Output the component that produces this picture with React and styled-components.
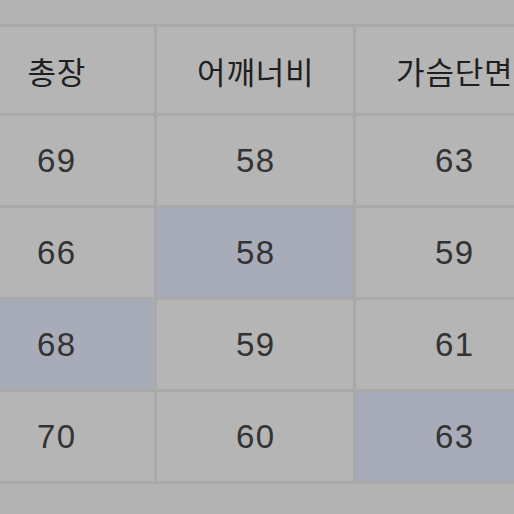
import React from "react";
import styled, { createGlobalStyle } from "styled-components";

const Global = createGlobalStyle`
  html, body { margin: 0; padding: 0; background: #b3b3b3; overflow: hidden; }
  body { width: 514px; height: 514px; }
`;

const Page = styled.div`
  width: 514px;
  height: 514px;
  overflow: hidden;
  background: #b3b3b3;
  padding-top: 24px;
  box-sizing: border-box;
`;

const Table = styled.div`
  margin-left: -42px;
  width: 600px;
  display: grid;
  grid-template-columns: 196px 196px 196px;
  grid-template-rows: 86px repeat(4, 89px);
  gap: 3px;
  padding: 3px 0;
  background: #a9a9a9;
  font-family: "Liberation Sans", "Noto Sans CJK KR", sans-serif;
`;

const Cell = styled.div`
  display: flex;
  align-items: center;
  justify-content: center;
  background: ${(p) => (p.$hl ? "#a8acb8" : "#b5b5b5")};
  color: #333;
  font-size: 33px;
  letter-spacing: 1.5px;
  padding-left: 1.5px;
  padding-top: 1px;
`;

const HeadCell = styled(Cell)`
  font-family: "Noto Sans CJK KR", sans-serif;
  font-size: 31px;
  color: #1f1f1f;
  letter-spacing: 0.8px;
  padding-top: 0;
`;

const headers = ["총장", "어깨너비", "가슴단면"];
const rows = [
  [["69"], ["58"], ["63"]],
  [["66"], ["58", true], ["59"]],
  [["68", true], ["59"], ["61"]],
  [["70"], ["60"], ["63", true]],
];

export default function App() {
  return (
    <>
      <Global />
      <Page>
        <Table>
          {headers.map((h) => (
            <HeadCell key={h}>{h}</HeadCell>
          ))}
          {rows.map((r, i) =>
            r.map(([v, hl], j) => (
              <Cell key={`${i}-${j}`} $hl={hl}>
                {v}
              </Cell>
            ))
          )}
        </Table>
      </Page>
    </>
  );
}
